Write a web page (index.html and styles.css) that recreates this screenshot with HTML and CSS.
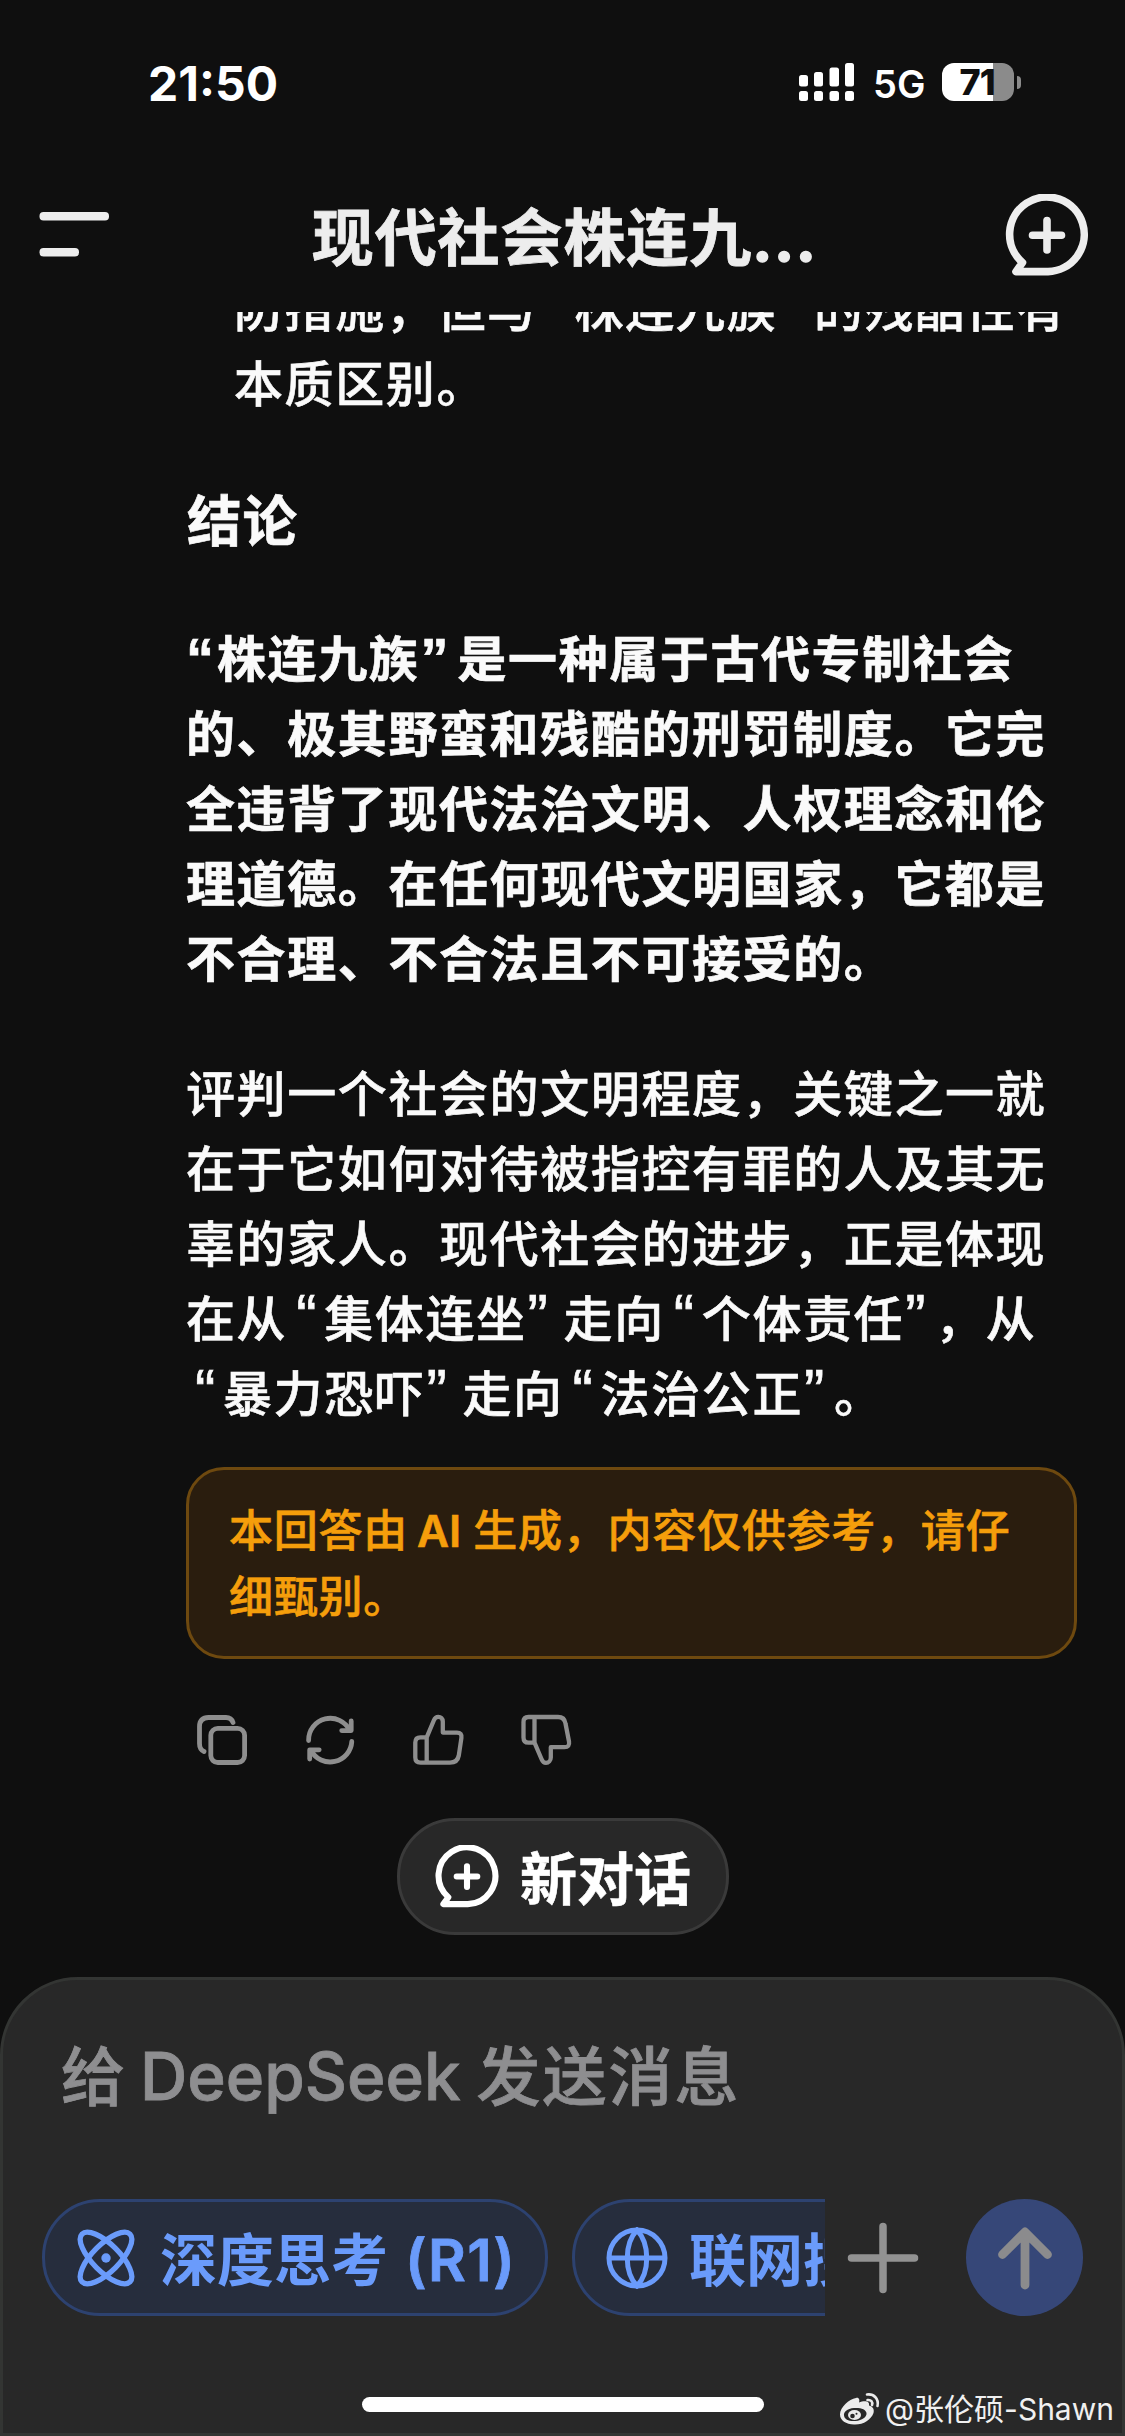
FILE: index.html
```html
<!DOCTYPE html>
<html lang="zh-CN">
<head>
<meta charset="utf-8">
<title>现代社会株连九族</title>
<link rel="stylesheet" href="styles.css">
</head>
<body>
<div class="screen">
  <div class="status">
    <span class="clock">21:50</span>
    <div class="status-right">
      <svg class="signal" width="56" height="40" viewBox="0 0 56 40" fill="#fff">
        <rect x="0" y="12" width="9" height="11.500" rx="2.500"/><rect x="15" y="9" width="9" height="14.500" rx="2.500"/><rect x="30.500" y="4.500" width="9.500" height="19" rx="2.500"/><rect x="46" y="0" width="9" height="23.500" rx="2.500"/>
        <rect x="0" y="28" width="9" height="10" rx="2.500"/><rect x="15" y="28" width="9" height="10" rx="2.500"/><rect x="30.500" y="28" width="9.500" height="10" rx="2.500"/><rect x="46" y="28" width="9" height="10" rx="2.500"/>
      </svg>
      <span class="network">5G</span>
      <span class="battery">71</span>
      <span class="battery-cap"></span>
    </div>
  </div>

  <div class="navbar">
    <svg width="72" height="50" viewBox="0 0 72 50" fill="#ededed"><rect x="0.500" y="1" width="69.500" height="8.500" rx="4"/><rect x="0.500" y="37" width="39.500" height="8.500" rx="4"/></svg>
    <h1 class="title">现代社会株连九<span class="dots">...</span></h1>
    <svg width="84" height="84" viewBox="0 0 84 84" fill="none" stroke="#ededed" stroke-width="7.600" stroke-linecap="round" stroke-linejoin="round"><path d="M43 77.600A37.300 37.300 0 1 0 17.500 68.500L11 77.600H43M42 26.500V56M27.500 41.300H56.500"/></svg>
  </div>

  <main class="chat">
    <div class="quote-tail">
      <p class="line">防措施，但与<span class="q open">“</span>株连九族<span class="q close">”</span>的残酷性有</p>
      <p class="line">本质区别。</p>
    </div>
    <h2 class="heading">结论</h2>
    <div class="para strong">
      <p class="line"><span class="q first">“</span>株连九族<span class="q close wide">”</span>是一种属于古代专制社会</p>
      <p class="line">的、极其野蛮和残酷的刑罚制度。它完</p>
      <p class="line">全违背了现代法治文明、人权理念和伦</p>
      <p class="line">理道德。在任何现代文明国家，它都是</p>
      <p class="line">不合理、不合法且不可接受的。</p>
    </div>
    <div class="para">
      <p class="line">评判一个社会的文明程度，关键之一就</p>
      <p class="line">在于它如何对待被指控有罪的人及其无</p>
      <p class="line">辜的家人。现代社会的进步，正是体现</p>
      <p class="line">在从<span class="q open">“</span>集体连坐<span class="q close">”</span>走向<span class="q open">“</span>个体责任<span class="q close tight">”</span>，从</p>
      <p class="line"><span class="q open">“</span>暴力恐吓<span class="q close">”</span>走向<span class="q open">“</span>法治公正<span class="q close tight">”</span>。</p>
    </div>
    <div class="notice">
      <p>本回答由<span class="ai">AI</span>生成，内容仅供参考，请仔</p>
      <p>细甄别。</p>
    </div>
    <div class="actions">
      <svg width="108" height="80" viewBox="0 0 108 80"><path d="M53 22.500C52 19.500 49.500 17.500 46 17.500H28.500Q19.500 17.500 19.500 26.500V43.500Q19.500 49.500 24 51.500"/><rect x="30.800" y="28.300" width="33.800" height="34.200" rx="7"/></svg>
      <svg width="108" height="80" viewBox="0 0 108 80"><path d="M20.600 40.500A21.700 21.700 0 0 1 61.800 30.500M63.200 21V30.600H53.700M63.800 41.500A21.700 21.700 0 0 1 23 50.500M21.700 59V49.800H31.200"/></svg>
      <svg class="thin" width="108" height="80" viewBox="0 0 108 80"><path d="M30.700 37.300H24.500Q19.300 37.300 19.300 42.500V57.500Q19.300 62.600 24.500 62.600H54Q61.500 62.600 62.800 55.500L65.400 38Q66.100 32.600 61 32.600H46.800V21.500C46.800 18.500 44.800 16.900 42.300 16.900C40.200 16.900 38.800 18 37.800 20.500L30.700 37.300V62"/></svg>
      <svg class="thin" width="108" height="80" viewBox="0 0 108 80"><path d="M30.500 42.700H24.500Q19.500 42.700 19.500 37.500V22Q19.500 17 24.500 17H54Q60.500 17 61.500 23.500L65 41.500Q66 47.200 60.500 47.200H46.800V57.500C46.800 60.500 44.500 62.900 42 62.900C39.800 62.900 38.500 61.500 37.500 59L30.500 42.700V17.500"/></svg>
    </div>
    <div class="new-chat">
      <svg width="64" height="64" viewBox="0 0 84 84" fill="none" stroke="#fff" stroke-width="8" stroke-linecap="round" stroke-linejoin="round"><path d="M43 77.600A37.300 37.300 0 1 0 17.500 68.500L11 77.600H43M42 28V55M28.500 41.300H55.500"/></svg>
      <span class="new-chat-label">新对话</span>
    </div>
  </main>

  <footer class="composer">
    <div class="placeholder">给<span class="latin">DeepSeek</span>发送消息</div>
    <div class="tools">
      <div class="chips">
        <div class="chip think">
          <svg width="60" height="60" viewBox="-30 -30 60 60" fill="none" stroke="#6a9bfb" stroke-width="5.300"><ellipse rx="33.900" ry="13.500" transform="rotate(45)"/><ellipse rx="33.900" ry="13.500" transform="rotate(-45)"/><circle r="4.700" fill="#6a9bfb" stroke="none"/></svg>
          <span class="chip-label">深度思考<span class="latin">(R1)</span></span>
        </div>
        <div class="chip search">
          <svg width="62" height="62" viewBox="-31 -31 62 62" fill="none" stroke="#6a9bfb" stroke-width="5"><circle r="28"/><path d="M-28 0H28M0-28C-13-14-13 14 0 28C13 14 13-14 0-28Z"/></svg>
          <span class="chip-label">联网搜索</span>
        </div>
      </div>
      <svg class="plus" width="72" height="72" viewBox="0 0 72 72" fill="none" stroke="#929292" stroke-width="7.500" stroke-linecap="round"><path d="M36 4.500V67.500M4.500 36H67.500"/></svg>
      <div class="send"><svg width="60" height="66" viewBox="0 0 60 66" fill="none" stroke="#8b8b8d" stroke-width="8.800" stroke-linecap="round" stroke-linejoin="round"><path d="M30 60V7M7.500 29.500L30 7L52.500 29.500"/></svg></div>
    </div>
    <div class="home-bar"></div>
  </footer>

  <div class="watermark">
    <svg width="42" height="34" viewBox="0 0 42 34"><path fill="#ececec" fill-rule="evenodd" d="M17 6C20 5 21 8 20 10.500C24 9 31 8 30 13.500C34 14.500 35.500 17.500 34.500 21C32 28 24 33 15 32.500C7 32.300 1 28.500 1 22.500C1 15.500 10 7 17 6ZM15 16C8 16.500 4.500 20 5 23.500C5.500 27.500 10 29.500 16.500 29C23 28.500 28 25 27.500 21C27 17.500 22 15.500 15 16Z"/><ellipse cx="15.500" cy="23" rx="6.500" ry="5" fill="#ececec"/><circle cx="13.500" cy="24" r="2.300" fill="#282828"/><circle cx="17.500" cy="21.800" r="1" fill="#282828"/><path fill="none" stroke="#ececec" stroke-width="2.600" stroke-linecap="round" d="M28 2.500C35 1.500 40 7 38.500 14M28.500 8C32 7.500 34 10 33 13"/></svg>
    <span>@张伦硕-Shawn</span>
  </div>
</div>
</body>
</html>
```
FILE: styles.css
```css
* { box-sizing: border-box; margin: 0; padding: 0; }
body { background: #0f0f0f; }
svg { display: block; flex: none; }
.screen {
  position: relative;
  width: 1125px;
  height: 2436px;
  overflow: hidden;
  display: flex;
  flex-direction: column;
  background: #0f0f0f;
  color: #fafafa;
  font-family: Inter, "Noto Sans CJK SC", sans-serif;
  white-space: nowrap;
}

.status {
  height: 166px;
  flex: none;
  display: flex;
  justify-content: space-between;
  padding: 63px 104px 0 148px;
  color: #fff;
}
.clock { font-size: 48px; font-weight: 700; line-height: 42px; }
.status-right { display: flex; align-items: flex-start; }
.network { margin-left: 18px; width: 69px; font-size: 38px; font-weight: 600; line-height: 43px; }
.battery {
  width: 72px;
  height: 38px;
  border-radius: 12px;
  background: linear-gradient(90deg, #fff 51px, #8b8b8b 51px);
  color: #0f0f0f;
  font-size: 36px;
  font-weight: 800;
  line-height: 39px;
  text-align: center;
  padding-right: 2px;
  letter-spacing: -1px;
}
.battery-cap { width: 4px; height: 13px; margin: 13px 0 0 3px; border-radius: 0 5px 5px 0; background: #8b8b8b; }

.navbar {
  height: 146px;
  flex: none;
  display: flex;
  align-items: center;
  justify-content: space-between;
  padding: 0 36px 6px 39px;
  color: #ededed;
}
.title {
  margin-left: 13px;
  padding-top: 5px;
  font-size: 62px;
  font-weight: 700;
  letter-spacing: 0.9px;
  line-height: 90px;
  -webkit-text-stroke: 0.8px;
}
.dots { letter-spacing: 1px; -webkit-text-stroke: 1.6px; }

.chat {
  height: 1665px;
  flex: none;
  display: flex;
  flex-direction: column;
  align-items: flex-start;
  overflow: hidden;
  padding-left: 186px;
  font-size: 49px;
  font-weight: 500;
  letter-spacing: 1.6px;
  -webkit-text-stroke: 0.6px;
}
.line { height: 75px; line-height: 75px; }
.quote-tail { margin: -40px 0 0 48px; }
.heading { margin: 56px 0 0 1px; height: 86px; line-height: 86px; font-size: 54.5px; font-weight: 700; letter-spacing: 1px; }
.para { margin-top: 60px; }
.strong { font-weight: 700; margin-top: 58px; }
.q {
  display: inline-block;
  font-family: "Liberation Sans", sans-serif;
  font-size: 61px;
  line-height: 60px;
  letter-spacing: 0;
}
.strong .q { font-size: 56px; }
.open { width: 37px; padding-left: 9px; }
.first { width: 31px; }
.close { width: 37px; padding-left: 1px; }
.wide { width: 38px; }
.tight { width: 31px; }

.notice {
  width: 891px;
  height: 192px;
  flex: none;
  margin-top: 35px;
  padding: 28px 0 0 40px;
  border: 3px solid #6e490f;
  border-radius: 38px;
  background: #2a1d0e;
  color: #f59e0b;
  font-size: 44px;
  letter-spacing: 0.75px;
}
.notice p { height: 66px; line-height: 66px; }
.ai { margin: 0 12px 0 9px; font-weight: 600; letter-spacing: 0; }

.actions { display: flex; margin: 41px 0 0 -6px; }
.actions svg { fill: none; stroke: #8e8e8e; stroke-width: 4.8; stroke-linecap: round; stroke-linejoin: round; }
.actions .thin { stroke-width: 4.3; }

.new-chat {
  display: flex;
  align-items: center;
  width: 332px;
  height: 117px;
  flex: none;
  margin: 38px 0 0 211px;
  padding-left: 35px;
  gap: 21px;
  border: 3px solid #3a3a3a;
  border-radius: 58px;
  background: #282828;
  color: #fff;
  font-size: 57px;
  font-weight: 700;
  letter-spacing: 0;
}
.new-chat-label { padding-bottom: 3px; }

.composer {
  flex: none;
  height: 459px;
  border: 3px solid #333533;
  border-radius: 78px 78px 0 0;
  background: #282828;
  display: flex;
  flex-direction: column;
}
.placeholder {
  height: 100px;
  margin: 47px 0 0 58px;
  line-height: 100px;
  color: #8e8e90;
  font-size: 64px;
  font-weight: 500;
  letter-spacing: 2px;
  -webkit-text-stroke: 0.8px;
}
.placeholder .latin { margin: 0 16px 0 13px; font-size: 65.5px; letter-spacing: 0; }
.tools { display: flex; align-items: center; margin-top: 72px; height: 117px; padding: 0 39px; }
.chips { display: flex; width: 783px; height: 117px; gap: 24px; overflow: hidden; }
.chip {
  flex: none;
  display: flex;
  align-items: center;
  height: 117px;
  border: 3px solid #2d4270;
  border-radius: 58px;
  background: #262d3d;
  color: #6a9bfb;
  font-size: 57px;
  font-weight: 700;
}
.think { width: 506px; padding-left: 31px; gap: 24px; }
.search { width: 380px; padding-left: 31px; gap: 21px; }
.chip-label { padding-bottom: 3px; }
.chip-label .latin { margin-left: 17px; font-size: 58px; font-weight: 600; letter-spacing: 1.4px; -webkit-text-stroke: 0.8px; }
.plus { margin-left: 22px; }
.send {
  display: flex;
  align-items: center;
  justify-content: center;
  width: 117px;
  height: 117px;
  margin-left: 47px;
  border-radius: 50%;
  background: #364778;
}
.home-bar { width: 402px; height: 15px; margin: 81px 0 0 359px; border-radius: 8px; background: #fff; }

.watermark {
  position: absolute;
  right: 11px;
  bottom: 5px;
  display: flex;
  align-items: center;
  gap: 4px;
  color: #f0f0f0;
  font-size: 30px;
  line-height: 44px;
}
```
